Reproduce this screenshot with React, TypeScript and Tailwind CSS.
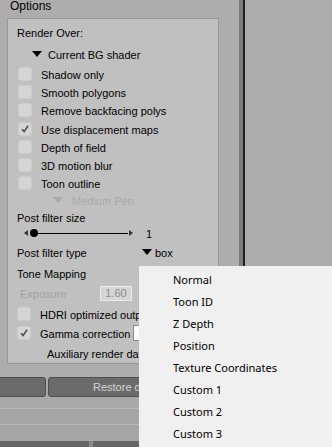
import React from 'react';

const Check = () => (
  <svg width="14" height="14" viewBox="0 0 14 14" className="block">
    <path d="M3.5 7.2 L6 10 L10.5 3.2" fill="none" stroke="#4a4a4a" strokeWidth="1.8" />
  </svg>
);

const CheckBox = ({ checked = false }: { checked?: boolean }) => (
  <div className="w-[14px] h-[14px] rounded-[3px] bg-[#d5d5d5] border border-[#cccccc] flex items-center justify-center shrink-0">
    {checked && <Check />}
  </div>
);

const Tri = ({ color = '#000' }: { color?: string }) => (
  <svg width="10" height="6" viewBox="0 0 10 6" className="block">
    <path d="M0 0 H10 L5 6 Z" fill={color} />
  </svg>
);

const CheckRow = ({ label, checked, className = '' }: { label: string; checked?: boolean; className?: string }) => (
  <div className={`h-[18px] flex items-center pl-[10px] gap-[9px] ${className}`}>
    <CheckBox checked={checked} />
    <span className="translate-y-[1px]">{label}</span>
  </div>
);

const menuItems = ['Normal', 'Toon ID', 'Z Depth', 'Position', 'Texture Coordinates', 'Custom 1', 'Custom 2', 'Custom 3'];

export default function App() {
  return (
    <div className="relative w-[332px] h-[447px] overflow-hidden bg-[#adadad] text-[11px] text-black font-['Liberation_Sans',Arial,sans-serif] flex flex-col">
      {/* top area: options column, splitter, right pane */}
      <div className="h-[377px] flex shrink-0">
        <div className="w-[239px] flex flex-col">
          <div className="h-[18px] pl-[10px] leading-[13px] text-[12px]">Options</div>
          <div className="ml-[7px] w-[212px] h-[346px] border border-[#999999] bg-[#c0c0c0] flex flex-col">
            <div className="h-[18px] mt-[5px] flex items-center pl-[9px]">Render Over:</div>
            <div className="h-[18px] mt-[3px] flex items-center pl-[24px]">
              <Tri />
              <span className="ml-[6px] translate-y-[1px]">Current BG shader</span>
            </div>
            <CheckRow label="Shadow only" className="mt-[2px]" />
            <CheckRow label="Smooth polygons" />
            <CheckRow label="Remove backfacing polys" />
            <CheckRow label="Use displacement maps" checked className="mt-[1px]" />
            <CheckRow label="Depth of field" />
            <CheckRow label="3D motion blur" />
            <CheckRow label="Toon outline" />
            <div className="h-[16px] flex items-center pl-[45px] text-[#a9a9a9]">
              <Tri color="#a9a9a9" />
              <span className="ml-[9px] translate-y-[1px]">Medium Pen</span>
            </div>
            <div className="h-[16px] mt-[2px] flex items-center pl-[9px]">Post filter size</div>
            <div className="h-[14px] flex items-center pl-[16px]">
              <svg width="4" height="6" viewBox="0 0 4 6" className="block">
                <path d="M4 0 V6 L0 3 Z" fill="#333" />
              </svg>
              <div className="ml-[2px] w-[8px] h-[8px] rounded-full bg-black" />
              <div className="w-[90px] h-px bg-black" />
              <svg width="4" height="6" viewBox="0 0 4 6" className="block ml-[1px]">
                <path d="M0 0 V6 L4 3 Z" fill="#333" />
              </svg>
              <span className="ml-[13px] translate-y-[1px]">1</span>
            </div>
            <div className="h-[18px] mt-[3px] flex items-center pl-[9px]">
              <span className="w-[125px] translate-y-[1px]">Post filter type</span>
              <Tri />
              <span className="ml-[3px] translate-y-[1px]">box</span>
            </div>
            <div className="h-[18px] mt-[3px] flex items-center pl-[9px]">
              <span className="translate-y-[1px]">Tone Mapping</span>
            </div>
            <div className="h-[18px] mt-[2px] flex items-center pl-[12px] text-[#a3a3a3]">
              <span className="w-[80px] translate-y-[1px]">Exposure</span>
              <div className="w-[32px] h-[15px] border border-[#ececec] bg-[#d6d6d6] text-[#8a8a8a] flex items-center justify-center">
                1.60
              </div>
            </div>
            <div className="h-[18px] mt-[3px] flex items-center pl-[9px] gap-[9px]">
              <CheckBox />
              <span className="translate-y-[1px] whitespace-nowrap">HDRI optimized output</span>
            </div>
            <div className="h-[18px] mt-[1px] flex items-center pl-[9px]">
              <CheckBox checked />
              <span className="ml-[9px] w-[93px] translate-y-[1px] whitespace-nowrap">Gamma correction</span>
              <div className="w-[20px] h-[16px] bg-white border border-[#8c8c8c]" />
            </div>
            <div className="h-[18px] mt-[2px] flex items-center pl-[39px]">
              <span className="translate-y-[1px] whitespace-nowrap">Auxiliary render data</span>
            </div>
          </div>
        </div>
        <div className="w-[4px] bg-[#7c7c7c]" />
        <div className="w-[2px] bg-[#1e1e1e]" />
        <div className="flex-1 bg-[#adadad]" />
      </div>

      {/* button row */}
      <div className="h-[20px] flex gap-[2px] shrink-0 bg-[#a9a9a9]">
        <div className="ml-[-6px] w-[52px] rounded-[3px] bg-[#6b6b6b] border border-[#4e4e4e]" />
        <div className="w-[184px] rounded-[3px] bg-[#6b6b6b] border border-[#4e4e4e] flex items-center pl-[44px] text-[#d4d4d4]">
          <span className="w-[46px] overflow-hidden whitespace-nowrap">Restore defaults</span>
        </div>
      </div>

      {/* lower strips */}
      <div className="h-[11px] bg-[#a9a9a9] shrink-0" />
      <div className="h-px bg-[#b8b8b8] shrink-0" />
      <div className="h-[15px] bg-[#a6a6a6] shrink-0" />
      <div className="h-px bg-[#b8b8b8] shrink-0" />
      <div className="h-[16px] bg-[#a6a6a6] shrink-0" />
      <div className="flex-1 bg-[#666666] flex">
        <div className="w-[89px]" />
        <div className="w-[4px] bg-[#8a8a8a]" />
      </div>

      {/* popup menu */}
      <div className="absolute left-[139px] top-[266px] right-0 bottom-0 bg-[#f0f0f0] pt-[3px] font-['Noto_Sans',sans-serif] text-[11px] text-black">
        {menuItems.map((m) => (
          <div key={m} className="h-[22px] flex items-center pl-[34px] whitespace-nowrap">
            {m}
          </div>
        ))}
      </div>
    </div>
  );
}
